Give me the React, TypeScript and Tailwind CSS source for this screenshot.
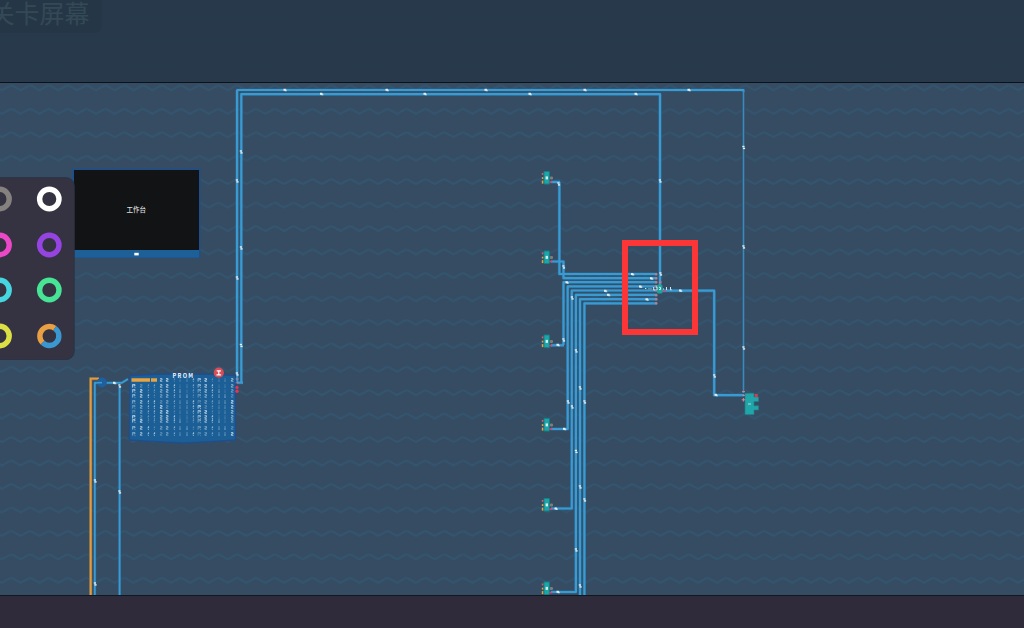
const BLUE = '#3b9ad2';
const wires: string[] = [
  'M237.3 382V90H743.5V393', 'M241.3 382V94.2H660V290',
  'M559.4 182V274H657', 'M551 182H560', 'M551 261.5H563.5V278.2H657', 'M563.5 345V282.2H657', 'M551 345.3H564',
  'M551 429H567.7V286.4H657', 'M551 508.5H571.8V290.5H657', 'M551 592H575.9V294.9H657', 'M580 595V299.2H657', 'M584.4 595V303.4H657',
  'M660 290.7H714.2V395.2H744', 'M94.8 595V382.8H122L128 379', 'M119.6 595V386', 'M237 382.7H243',
];
const thinWires = new Set([0, 13, 14]);
const flatTicks: number[][] = [
  [285, 90], [387, 90], [486, 90], [585, 90], [689, 90], [321.5, 94], [425, 94], [530, 94], [636, 94],
  [632.5, 274.3], [651.5, 278.5], [567, 282.5], [640.5, 286.7], [605.5, 291], [608.5, 295], [647, 299.5],
  [680.5, 290.7], [716, 395], [558, 345], [564.5, 429], [556, 508.7], [558, 592], [114.5, 383],
];
const uprightTicks: number[][] = [
  [241, 152], [237, 181], [241, 248], [237, 278], [241, 345.5], [237, 374], [660, 181], [743.5, 147.5], [743.5, 247], [743.5, 348],
  [558.5, 184], [563.5, 267], [572, 298], [660.5, 274], [714.3, 376], [563.5, 340], [576, 351], [580, 388], [584.5, 402], [568, 402],
  [572, 407], [576, 451.5], [580, 487], [584.5, 500], [576, 550], [580, 586], [95, 481], [119.5, 492], [95, 584], [119.5, 386],
];
const chips = [178, 257.5, 341.5, 425, 505, 588.5];
const rows = [380, 386, 391, 396, 402, 407, 412, 417, 421, 428, 434];
const cols = [134, 141, 148, 154, 161, 167, 174, 180, 187, 193, 199.5, 205.5, 212, 219, 225, 232];
const rings = [199, 245, 290, 336];
const left = ['#85817e', '#eb48c7', '#46d6df', '#dbe044'];
const right = ['#ffffff', '#9544e2', '#47e495'];
const glyphs = [
  'M-1.4 -1.6v3.2M-1.4 -1.4h2.4v1.2h-1.6M1 1.3v.8',
  'M-1 -1.4h2v1.4h-1.6v1.3h2',
  'M.6 -1.7v1.6h-1M.4 1v.8',
  'M0 -1.5v1M0 .3v1.4',
];
const columnGlyph = [0, 1, 2, 2, 1, 1, 2, 3, 3, 2, 0, 1, 2, 3, 3, 1];

function Circuit() {
  return (
    <svg className="absolute inset-0 h-[628px] w-[1024px]" viewBox="0 0 1024 628" fontFamily="'Noto Sans CJK SC', sans-serif">
      <defs>
        <pattern id="wave" x="1.9" y="13" width="18.82" height="23.45" patternUnits="userSpaceOnUse">
          <path d="M-9.4 2.2L0 7L7.8 2.6Q9.4 1.8 11 2.6L18.82 7L28.2 2.2" fill="none" stroke="#33556f" strokeWidth="1.9" />
        </pattern>
        <clipPath id="board"><path d="M0 83H1024V595H0Z" /></clipPath>
      </defs>
      <path d="M0 0H1024V595H0Z" fill="#354c63" />
      <path d="M0 0H1024V595H0Z" fill="url(#wave)" />
      <path d="M0 0H1024V82H0Z" fill="#263748" fillOpacity=".9" />
      <path d="M0 82.5H1024" stroke="#0c1217" />
      <path d="M0 -9H102V24Q102 33 93 33H0Z" fill="#253746" />
      <text x="-10.5" y="22.6" fontSize="25" fill="#344956">关卡屏幕</text>
      <g clipPath="url(#board)">
        <path d="M90.7 595V378.7H99" fill="none" stroke="#8b7352" strokeWidth="3" />
        <path d="M90.7 595V378.7H99" fill="none" stroke="#e39b3c" strokeWidth="1.8" />
        {wires.map((d, i) => <path key={d} d={d} fill="none" stroke="#2b6c95" strokeWidth={thinWires.has(i) ? 2.9 : 3.4} strokeLinejoin="round" opacity=".7" />)}
        {wires.map((d, i) => <path key={d} d={d} fill="none" stroke={BLUE} strokeWidth={thinWires.has(i) ? 1.8 : 2.2} strokeLinejoin="round" />)}
        <path d="M743.5 92V393" stroke="#344c63" strokeWidth="3.4" />
        <path d="M743.5 91V393" stroke="#3a8bbd" strokeWidth="1.6" />
        <path d="M236.8 90v291" stroke={BLUE} strokeWidth="2" />
        <circle cx="101.8" cy="382.5" r="5" fill="#1e5f9d" />
        <path d="M97 382.7h5" stroke={BLUE} strokeWidth="1.6" />
        {[274, 278, 282, 286, 290, 295, 299, 303].map((y) => <rect key={y} x="655" y={y - 0.7} width="2.5" height="2" fill="#b78091" />)}
        <rect x="659" y="281.3" width="2.5" height="2" fill="#cc7186" />
        {flatTicks.map(([x, y]) => (
          <g key={`${x}-${y}`} fill="#e5f2f8"><rect x={x - 1.5} y={y - 1.2} width="2.4" height="2" /><rect x={x - 0.2} y={y - 0.3} width="2" height="1.6" opacity=".7" /></g>
        ))}
        {uprightTicks.map(([x, y]) => (
          <g key={`${x}-${y}`} fill="#e5f2f8"><rect x={x - 1.2} y={y - 1.7} width="2.2" height="1.4" /><rect x={x - 0.6} y={y + 0.2} width="2.2" height="1.4" /></g>
        ))}
        {chips.map((y) => (
          <g key={y}>
            <rect x="543.5" y={y - 7} width="6.4" height="13.5" rx="1" fill="#197e85" />
            <rect x="544.5" y={y - 6} width="4.4" height="11.5" fill="#1ba7a9" />
            <rect x="545.6" y={y - 1.6} width="2.4" height="3" fill="#d0eded" />
            <rect x="541.8" y={y - 5} width="1.5" height="1.8" fill="#d95c6b" />
            <rect x="541.8" y={y - 0.8} width="1.5" height="1.8" fill="#e6a23f" />
            <rect x="541.8" y={y + 2.6} width="1.5" height="3" fill="#e6a23f" />
            <rect x="549.8" y={y - 1.6} width="3.2" height="3" rx="1.2" fill="#807d79" />
            <rect x="549.5" y={y + 3.2} width="2.8" height="1.7" fill="#cc4b7e" />
          </g>
        ))}
        <rect x="657" y="284.5" width="5.5" height="9" rx="1.5" fill="#1ba39e" />
        <path d="M645 288.5h1.3M648.5 288.8h1M650.5 288.8h1M653.7 287v3h1.5M656 287h1v3M659 287.3h1.5v2.3h-1.5M663 289h1M666.5 287v3M670.5 287v2.8h1.2" fill="none" stroke="#d5e9eb" />
        <rect x="663" y="290" width="2.5" height="1.7" fill="#cc4b7e" />
        <path d="M745 393.3H754V397H758.5V401.5H754V405.8H758.5V410H754V414.5H745Z" fill="#20a5a8" stroke="#227e8b" strokeWidth=".7" />
        <path d="M748 404h3" stroke="#b1e1df" />
        <rect x="754.8" y="394" width="3" height="3" fill="#dd3754" />
        <path d="M741.7 399.8h3.5M743.4 398v3.5M742 391.7h3M742.5 395.3h2.5" stroke="#db8795" />
        <path d="M72 168.5H200.5V258H72Z" fill="#204e8a" />
        <path d="M74 170H199V250H74Z" fill="#111315" />
        <path d="M74 250H199V257.5H74Z" fill="#1d6098" />
        <path d="M134.3 252.8H138.7V255.4H134.3Z" fill="#fff" />
        <text x="126.5" y="212.3" fontSize="6.5" fontWeight="500" fill="#dedfdf">工作台</text>
        <path d="M130 375.5Q183 372 235.5 375.5V440Q207 442 183 443Q160 442 129.5 440Z" fill="#1b5f96" stroke="#204e8d" strokeWidth="1.3" />
        {rows.flatMap((y, i) => cols.map((x, j) => y === 380 && j < 4 ? null : (
          <path key={`${x}-${y}`} d={glyphs[columnGlyph[j]]} transform={`translate(${x} ${y})`} fill="none" stroke="#c6dbe8" strokeWidth="1" opacity={0.3 + ((i * 5 + j * 7) % 6) * 0.11} />
        )))}
        <path d="M131.5 378.2H150V381.7H131.5ZM151 378.2H157V381.7H151Z" fill="#e8a343" />
        <text x="172.5" y="377.7" fontSize="5.6" fontWeight="700" textLength="20.5" lengthAdjust="spacing" fill="#edf5fa">PROM</text>
        <circle cx="218.8" cy="372.7" r="5.1" fill="#d94d57" />
        <path d="M216.7 370.8h4.2M218.8 371v4M216.5 374.8h4.6" stroke="#fff" strokeWidth="1.2" />
        <path d="M235.6 379h3M235.6 382.8h3" stroke="#c47c98" />
        <circle cx="237" cy="387.5" r="1.7" fill="#dd3658" />
        <circle cx="237" cy="391.3" r="1.7" fill="#dd3658" />
      </g>
      <rect x="625" y="243" width="70" height="89" fill="none" stroke="#fc3636" strokeWidth="6" />
    </svg>
  );
}

function Palette() {
  return (
    <div className="absolute -left-3 top-[177px] h-[183px] w-[87px]">
      <svg className="h-[183px] w-[87px]" viewBox="-12 177 87 183">
        <rect x="-11" y="177.7" width="85.2" height="181.8" rx="8" fill="#353342" stroke="#2b3446" />
        {rings.map((y, i) => (
          <g key={y} fill="none" strokeWidth="5.4">
            <circle cx="-.5" cy={y} r="9.7" stroke={left[i]} />
            {i < 3 ? <circle cx="49.3" cy={y} r="9.7" stroke={right[i]} /> : (
              <>
                <path d="M42.6 342.7A9.5 9.5 0 0 1 54.75 328.2" stroke="#e99f43" />
                <path d="M54.75 328.2A9.5 9.5 0 1 1 42.6 342.7" stroke="#3b97cf" />
              </>
            )}
          </g>
        ))}
      </svg>
    </div>
  );
}

export default function App() {
  return (
    <main className="relative flex h-[628px] w-[1024px] flex-col justify-end overflow-hidden bg-[#344c63]">
      <Circuit />
      <Palette />
      <footer className="relative h-[33px] border-t border-[#101922] bg-[#2f2b3b]" />
    </main>
  );
}
